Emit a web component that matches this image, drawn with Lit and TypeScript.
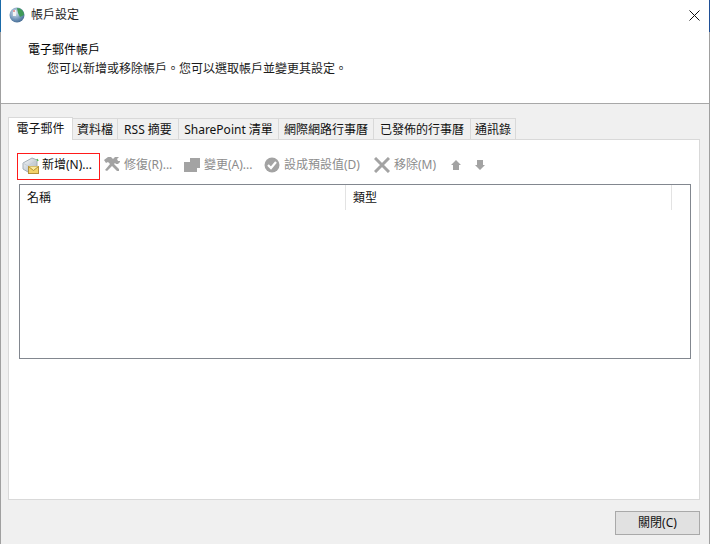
import { LitElement, html, css, svg } from "lit";
import { customElement } from "lit/decorators.js";

const tabs = [
  ["電子郵件", 65],
  ["資料檔", 46],
  ["RSS 摘要", 62],
  ["SharePoint 清單", 101],
  ["網際網路行事曆", 96],
  ["已發佈的行事曆", 98],
  ["通訊錄", 46],
] as const;

const G = "#a3a3a3";
const icons = {
  mail: svg`<defs><linearGradient id="g" x1="0" y1="0" x2="1" y2="1"><stop offset="0" stop-color="#f6f8fa"/><stop offset="1" stop-color="#a9b4bd"/></linearGradient></defs>
    <path d="M1 6 L10 1 L15 3 L15 9 L6 15 L1 12Z" fill="url(#g)" stroke="#a3adb5"/>
    <path d="M1 6 L6 9 L15 3" fill="none" stroke="#c6ced4"/>
    <path d="M15 2 L16 4" stroke="#58b858" stroke-width="1.5"/>
    <rect x="6.5" y="9.5" width="10" height="7" fill="#f2d268" stroke="#b3913a"/>
    <path d="M6.5 9.5 L11.5 13.5 L16.5 9.5" fill="#fbeb9f" stroke="#b3913a"/>`,
  tools: svg`<path d="M0 3 L4 0 L7 0 L9 2 L11 0 L15 0 L13 2 L14 4 L16 4 L16 5 L14 7 L12 7 L11 6 L10 7 L15 12 L15 14 L13 14 L8 9 L3 14 L1 13 L6 7 L4 5 L2 6Z" fill="${G}"/>`,
  copy: svg`<path d="M6 1 H16 V11 H13 V15 H0 V5 H6Z" fill="${G}"/><path d="M0 4.5 H5.5 V1" stroke="#fff" stroke-width="1" fill="none"/>`,
  check: svg`<circle cx="8" cy="8" r="7.5" fill="${G}"/><path d="M4 8 L7 11 L12 5" stroke="#fff" stroke-width="2.2" fill="none"/>`,
  x: svg`<path d="M1 1 L15 15 M15 1 L1 15" stroke="${G}" stroke-width="3" fill="none"/>`,
  up: svg`<path d="M6 1 L11 6 H9 V11 H3 V6 H1Z" fill="${G}"/>`,
  down: svg`<path d="M6 11 L11 6 H9 V1 H3 V6 H1Z" fill="${G}"/>`,
  globe: svg`<defs><radialGradient id="b" cx=".4" cy=".35" r=".75"><stop offset="0" stop-color="#dfe9f2"/><stop offset=".6" stop-color="#6f93b8"/><stop offset="1" stop-color="#3b6188"/></radialGradient></defs>
    <circle cx="8" cy="8" r="7.5" fill="url(#b)"/>
    <path d="M8 1 C12 1 15 4 15 8 L11 10 L9 6Z" fill="#3f9a57"/>
    <rect x="4" y="3" width="3" height="6" fill="#f3f3f3"/><rect x="4.5" y="3" width="1" height="2" fill="#d04a4a"/>`,
};

@customElement("app-root")
export class AppRoot extends LitElement {
  static styles = css`
    :host {
      display: block;
      width: 710px;
      height: 544px;
      font-family: "Noto Sans", "Noto Sans CJK TC", sans-serif;
      font-size: 12px;
      line-height: 16px;
      color: #000;
      --frame: #a0a0a0;
    }
    .win {
      box-sizing: border-box;
      width: 710px;
      height: 544px;
      background: #f0f0f0;
      border-left: 1px solid var(--frame);
      border-right: 1px solid var(--frame);
      display: flex;
      flex-direction: column;
      position: relative;
    }
    .accent {
      position: absolute;
      top: 0;
      width: 1px;
      height: 32px;
      background: #1a6aa8;
    }
    .accent.l { left: -1px; }
    .accent.r { right: -1px; background: #1f4f96; }
    .head {
      height: 104px;
      box-sizing: border-box;
      background: #fff;
      border-bottom: 1px solid #a8a8a8;
      flex: none;
    }
    .title {
      height: 30px;
      display: flex;
      align-items: center;
      padding-left: 8px;
      gap: 6px;
      color: #222;
    }
    .title svg { width: 16px; height: 16px; }
    .close { margin-left: auto; margin-right: 9px; width: 11px; height: 11px; }
    .close svg { width: 11px; height: 11px; display: block; }
    .h1 { margin: 12px 0 0 27px; height: 16px; }
    .h2 { margin: 3px 0 0 46px; height: 16px; color: #1c1c1c; }
    .tabs {
      display: flex;
      margin: 13px 0 0 7px;
      height: 22px;
      align-items: flex-end;
      position: relative;
      z-index: 1;
    }
    .tab {
      box-sizing: border-box;
      height: 21px;
      background: #f0f0f0;
      border: 1px solid #d9d9d9;
      border-bottom: none;
      margin-left: -1px;
      text-align: center;
      line-height: 21px;
      white-space: nowrap;
      color: #111;
    }
    .tab:first-child { margin-left: 0; }
    .tab.on {
      height: 23px;
      margin-bottom: -1px;
      background: #fff;
      line-height: 21px;
    }
    .panel {
      box-sizing: border-box;
      margin-left: 7px;
      width: 692px;
      height: 361px;
      background: #fff;
      border: 1px solid #d9d9d9;
      padding: 13px 7px 0 8px;
      flex: none;
    }
    .bar { display: flex; align-items: center; height: 27px; color: #8c8c8c; }
    .new-account {
      box-sizing: border-box;
      width: 83px;
      height: 27px;
      border: 1px solid #ff1a1a;
      background: #fff;
      display: flex;
      align-items: center;
      padding: 0 0 2px 4px;
      gap: 3px;
      color: #111;
      flex: none;
    }
    .new-account svg { width: 17px; height: 17px; flex: none; }
    .new-account span { padding-bottom: 2px; white-space: nowrap; }
    .item { display: flex; align-items: center; gap: 4px; white-space: nowrap; flex: none; padding-bottom: 4px; }
    .item svg { width: 16px; height: 16px; flex: none; }
    .arrow { width: 12px; height: 12px; flex: none; margin-bottom: 4px; }
    .i1 { margin-left: 4px; width: 76px; }
    .i2 { margin-left: 4px; width: 76px; }
    .i3 { margin-left: 4px; width: 106px; }
    .i4 { margin-left: 4px; width: 72px; }
    .a1 { margin-left: 4px; }
    .a2 { margin-left: 12px; }
    .list {
      box-sizing: border-box;
      margin: 4px 0 0 2px;
      width: 672px;
      height: 175px;
      border: 1px solid #82878f;
    }
    .cols { display: flex; height: 25px; }
    .col {
      box-sizing: border-box;
      height: 25px;
      padding-left: 7px;
      line-height: 25px;
      border-right: 1px solid #e3e3e3;
      color: #111;
      flex: none;
    }
    .foot { display: flex; justify-content: flex-end; padding: 11px 9px 0 0; }
    .btn {
      box-sizing: border-box;
      width: 85px;
      height: 24px;
      background: #e1e1e1;
      border: 1px solid #a9a9a9;
      text-align: center;
      line-height: 22px;
      color: #111;
    }
  `;

  render() {
    return html`<div class="win">
      <div class="accent l"></div>
      <div class="accent r"></div>
      <div class="head">
        <div class="title">
          <svg viewBox="0 0 16 16">${icons.globe}</svg>
          <span>帳戶設定</span>
          <span class="close"><svg viewBox="0 0 11 11"><path d="M.5 .5 L10.5 10.5 M10.5 .5 L.5 10.5" stroke="#111" fill="none"/></svg></span>
        </div>
        <div class="h1">電子郵件帳戶</div>
        <div class="h2">您可以新增或移除帳戶。您可以選取帳戶並變更其設定。</div>
      </div>
      <div class="tabs">
        ${tabs.map(
          ([t, w], i) =>
            html`<div class="tab ${i === 0 ? "on" : ""}" style="width:${w}px">${t}</div>`
        )}
      </div>
      <div class="panel">
        <div class="bar">
          <div class="new-account"><svg viewBox="0 0 17 17">${icons.mail}</svg><span>新增(N)...</span></div>
          <div class="item i1"><svg viewBox="0 0 16 16">${icons.tools}</svg><span>修復(R)...</span></div>
          <div class="item i2"><svg viewBox="0 0 16 16">${icons.copy}</svg><span>變更(A)...</span></div>
          <div class="item i3"><svg viewBox="0 0 16 16">${icons.check}</svg><span>設成預設值(D)</span></div>
          <div class="item i4"><svg viewBox="0 0 16 16">${icons.x}</svg><span>移除(M)</span></div>
          <svg class="arrow a1" viewBox="0 0 12 12">${icons.up}</svg>
          <svg class="arrow a2" viewBox="0 0 12 12">${icons.down}</svg>
        </div>
        <div class="list">
          <div class="cols">
            <div class="col" style="width:326px">名稱</div>
            <div class="col" style="width:326px">類型</div>
          </div>
        </div>
      </div>
      <div class="foot"><div class="btn">關閉(C)</div></div>
    </div>`;
  }
}
